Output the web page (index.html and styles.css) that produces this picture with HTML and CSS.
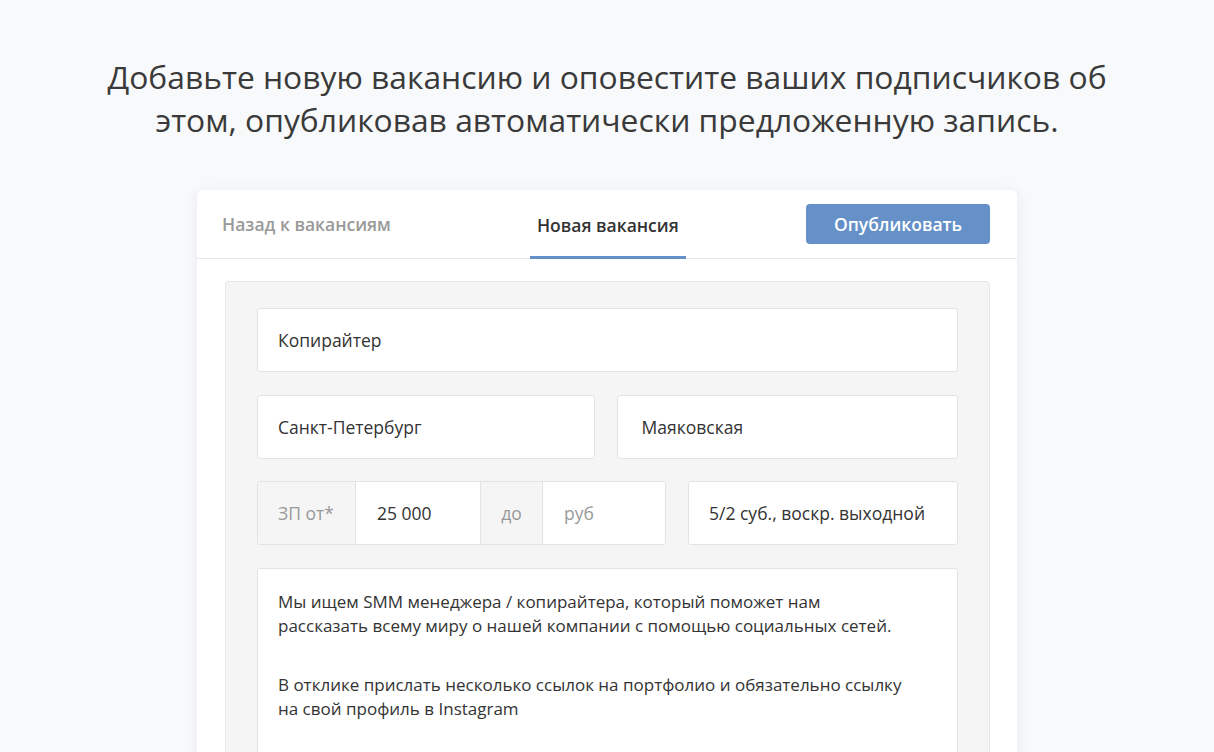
FILE: index.html
```html
<!DOCTYPE html>
<html lang="ru">
<head>
  <meta charset="UTF-8" />
  <meta name="viewport" content="width=device-width, initial-scale=1.0"/>
  <title>Новая вакансия</title>
  <link rel="stylesheet" href="styles.css">
</head>
<body>
  <div class="page">
    <h1 class="intro">Добавьте новую вакансию и оповестите ваших подписчиков об этом, опубликовав автоматически предложенную запись.</h1>

    <div class="card">
      <div class="card-header">
        <a class="tab tab-back">Назад к вакансиям</a>
        <a class="tab tab-active">Новая вакансия</a>
        <button class="publish-btn">Опубликовать</button>
      </div>

      <div class="card-body">
        <div class="form-panel">
          <div class="field">Копирайтер</div>

          <div class="row">
            <div class="field">Санкт-Петербург</div>
            <div class="field field-metro">Маяковская</div>
          </div>

          <div class="row">
            <div class="salary-group">
              <span class="addon addon-from">ЗП от*</span>
              <span class="group-input salary-from">25 000</span>
              <span class="addon addon-to">до</span>
              <span class="group-input placeholder salary-to">руб</span>
            </div>
            <div class="field">5/2 суб., воскр. выходной</div>
          </div>

          <div class="field textarea">
            <p>Мы ищем SMM менеджера / копирайтера, который поможет нам<br>рассказать всему миру о нашей компании с помощью социальных сетей.</p>
            <p>В отклике прислать несколько ссылок на портфолио и обязательно ссылку<br>на свой профиль в Instagram</p>
          </div>
        </div>
      </div>
    </div>
  </div>
</body>
</html>
```

FILE: styles.css
```css
body {
  margin: 0;
  font-family: "Open Sans", "Noto Sans", sans-serif;
  background-color: #f8f9fb;
  color: #333;
  height: 752px;
  overflow: hidden;
}
.page {
  display: flex;
  flex-direction: column;
  align-items: center;
  padding-top: 55px;
}
.intro {
  margin: 0;
  width: 1020px;
  text-align: center;
  font-size: 31.8px;
  font-weight: normal;
  line-height: 43px;
  color: #3a3a3a;
}
.card {
  margin-top: 49px;
  width: 820px;
  height: 600px;
  background-color: #fff;
  border-radius: 6px;
  box-shadow: 0 2px 14px rgba(40, 50, 70, 0.08);
}
.card-header {
  display: flex;
  align-items: center;
  height: 68px;
  padding: 0 27px 0 25px;
  border-bottom: 1px solid #e6e8eb;
}
.tab {
  font-size: 17.5px;
  font-weight: 600;
  display: flex;
  align-items: center;
  height: 100%;
  box-sizing: border-box;
}
.tab-back {
  color: #999;
}
.tab-active {
  color: #333;
  margin-left: 139px;
  padding: 3px 7px 0 7px;
  border-bottom: 3px solid #6690c8;
  margin-bottom: -1px;
  height: 69px;
}
.publish-btn {
  margin-left: auto;
  width: 184px;
  height: 40px;
  background-color: #6690c8;
  color: #fff;
  border: none;
  border-radius: 4px;
  font-family: inherit;
  font-size: 17.5px;
  font-weight: 600;
  cursor: pointer;
}
.card-body {
  padding: 22px 27px 0 28px;
}
.form-panel {
  background-color: #f5f5f5;
  border: 1px solid #e6e6e6;
  border-radius: 3px;
  padding: 26px 31px 40px 31px;
  display: flex;
  flex-direction: column;
  gap: 22.5px;
}
.row {
  display: flex;
  gap: 22px;
}
.field {
  flex: 1;
  height: 64px;
  box-sizing: border-box;
  display: flex;
  align-items: center;
  padding: 0 20px;
  background-color: #fff;
  border: 1px solid #e3e3e3;
  border-radius: 3px;
  font-size: 17.5px;
  color: #333;
}
.form-panel > .field {
  flex: none;
}
.field-metro {
  padding-left: 24px;
}
.salary-group {
  display: flex;
  width: 409px;
  height: 64px;
  box-sizing: border-box;
  border: 1px solid #e3e3e3;
  border-radius: 3px;
  background-color: #fff;
  overflow: hidden;
  font-size: 17.5px;
}
.addon {
  display: flex;
  align-items: center;
  background-color: #f5f5f5;
  color: #999;
}
.addon-from {
  width: 98px;
  padding-left: 20px;
  box-sizing: border-box;
  border-right: 1px solid #e3e3e3;
}
.addon-to {
  width: 63px;
  justify-content: center;
  border-left: 1px solid #e3e3e3;
  border-right: 1px solid #e3e3e3;
  box-sizing: border-box;
}
.group-input {
  display: flex;
  align-items: center;
  padding-left: 21px;
  box-sizing: border-box;
}
.salary-from {
  width: 124px;
  color: #333;
}
.salary-to {
  flex: 1;
}
.placeholder {
  color: #999;
}
.textarea {
  height: 240px;
  display: block;
  padding: 21px 20px;
  font-size: 17px;
  line-height: 24px;
}
.textarea p {
  margin: 0 0 35px 0;
  white-space: nowrap;
}
```
